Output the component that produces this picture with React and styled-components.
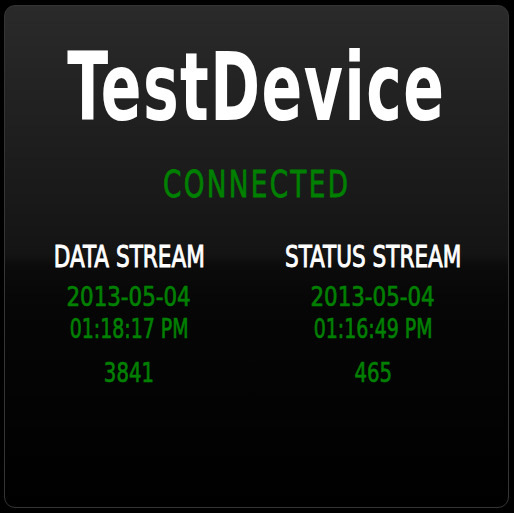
import React from "react";
import styled, { createGlobalStyle } from "styled-components";

const GlobalStyle = createGlobalStyle`
  html, body {
    margin: 0;
    padding: 0;
    background: #000;
  }
  body {
    font-family: "DejaVu Sans", "Liberation Sans", sans-serif;
    font-stretch: condensed;
  }
`;

const Page = styled.div`
  padding: 5px 5px 5px 4px;
`;

const Card = styled.div`
  box-sizing: border-box;
  width: 505px;
  height: 503px;
  border: 1px solid #353535;
  border-radius: 11px;
  background: linear-gradient(
    to bottom,
    #2a2a2a 0px,
    #141414 248px,
    #0b0b0b 260px,
    #060606 300px,
    #000 100%
  );
  display: flex;
  flex-direction: column;
  align-items: center;
  color: #fff;
`;

const Title = styled.h1`
  margin: 30px 0 0;
  font-size: 94px;
  font-weight: 700;
  line-height: 104px;
  letter-spacing: 2px;
  color: #fff;
  transform: scaleX(0.71);
`;

const Status = styled.div`
  margin-top: 24px;
  font-size: 38px;
  line-height: 40px;
  letter-spacing: 3px;
  color: #008000;
  -webkit-text-stroke: 0.8px #008000;
  transform: scaleX(0.77);
`;

const Streams = styled.div`
  display: grid;
  grid-template-columns: 244px 244px;
  margin-top: 36px;
  margin-left: 2px;
  align-self: flex-start;
`;

const Column = styled.div`
  display: flex;
  flex-direction: column;
  align-items: center;
`;

const Heading = styled.div`
  font-size: 30px;
  line-height: 34px;
  color: #fff;
  -webkit-text-stroke: 0.9px #fff;
  transform: scaleX(0.8);
`;

const Value = styled.div`
  font-size: 27px;
  line-height: 32px;
  color: #008000;
  -webkit-text-stroke: 0.7px #008000;
  margin-top: ${(p) => p.$gap || 0}px;
  transform: scaleX(${(p) => p.$squeeze || 0.85});
`;

const streams = [
  { name: "DATA STREAM", date: "2013-05-04", time: "01:18:17 PM", count: "3841" },
  { name: "STATUS STREAM", date: "2013-05-04", time: "01:16:49 PM", count: "465" },
];

export default function App() {
  return (
    <Page>
      <GlobalStyle />
      <Card>
        <Title>TestDevice</Title>
        <Status>CONNECTED</Status>
        <Streams>
          {streams.map((s) => (
            <Column key={s.name}>
              <Heading>{s.name}</Heading>
              <Value $gap={7} $squeeze={0.88}>{s.date}</Value>
              <Value $squeeze={0.78}>{s.time}</Value>
              <Value $gap={12} $squeeze={0.81}>{s.count}</Value>
            </Column>
          ))}
        </Streams>
      </Card>
    </Page>
  );
}
